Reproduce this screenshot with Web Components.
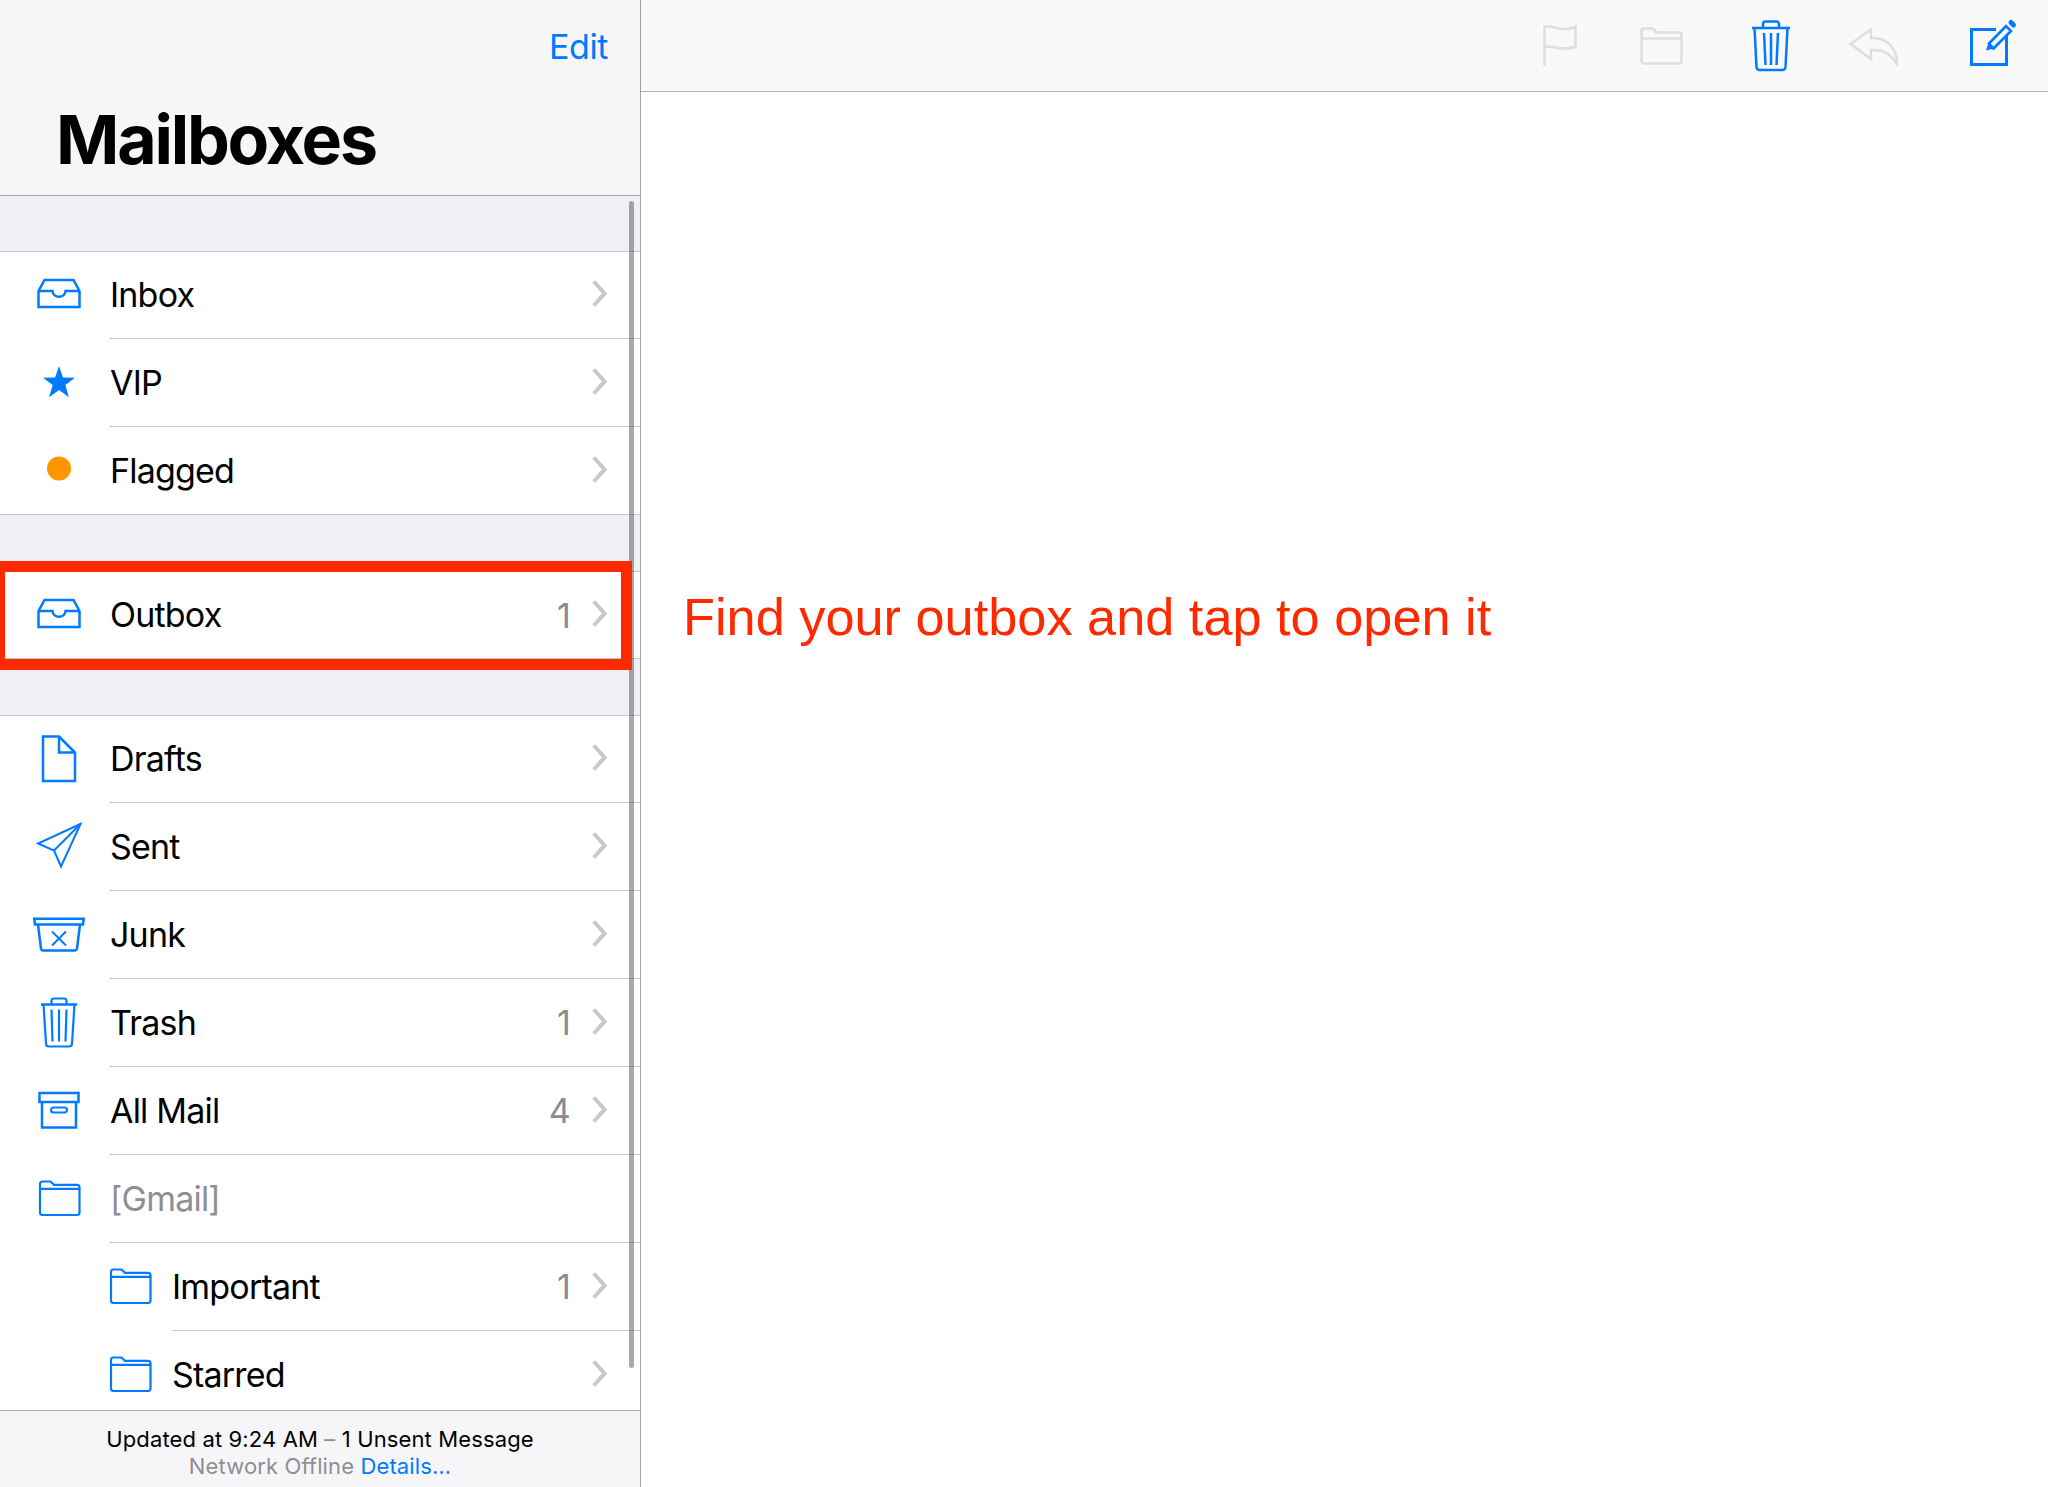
<!DOCTYPE html>
<html lang="en">
<head>
<meta charset="utf-8">
<title>Mailboxes</title>
<style>
html,body{margin:0;padding:0;height:100%;overflow:hidden;background:#fff;font-family:Inter,"Liberation Sans",sans-serif}
</style>
</head>
<body>
<mail-app>
  <mail-sidebar slot="side">
    <mail-header></mail-header>
    <mail-list>
      <mail-section>
        <mailbox-row icon="inbox" h="87">Inbox</mailbox-row>
        <mailbox-row icon="star">VIP</mailbox-row>
        <mailbox-row icon="dot" last h="87">Flagged</mailbox-row>
      </mail-section>
      <mail-section>
        <mailbox-row icon="inbox" count="1" last h="86">Outbox</mailbox-row>
      </mail-section>
      <mail-section>
        <mailbox-row icon="draft" h="87">Drafts</mailbox-row>
        <mailbox-row icon="sent">Sent</mailbox-row>
        <mailbox-row icon="junk">Junk</mailbox-row>
        <mailbox-row icon="trash" count="1">Trash</mailbox-row>
        <mailbox-row icon="archive" count="4">All Mail</mailbox-row>
        <mailbox-row icon="folder" muted>[Gmail]</mailbox-row>
        <mailbox-row icon="folder" count="1" sub>Important</mailbox-row>
        <mailbox-row icon="folder" sub last>Starred</mailbox-row>
      </mail-section>
    </mail-list>
    <mail-footer></mail-footer>
  </mail-sidebar>
  <mail-detail slot="main"></mail-detail>
</mail-app>
<script>
const BLUE = '#007aff';
const ICONS = {
  inbox:`<g fill="none" stroke="${BLUE}" stroke-width="2.5"><path d="M-20.5 -4.5L-14.5 -15.5H14.5L20.5 -4.5V11.5H-20.5Z"/><path d="M-20.5 -4.5H-6.5C-6 3 6 3 6.5 -4.5H20.5"/></g>`,
  star:`<path fill="${BLUE}" d="M0 -16.5L3.9 -4.9L16 -4.7L6.3 2.6L9.9 14.8L0 7.5L-9.9 14.8L-6.3 2.6L-16 -4.7L-3.9 -4.9Z"/>`,
  dot:`<circle cx="0" cy="-2" r="12" fill="#ff9500"/>`,
  draft:`<g fill="none" stroke="${BLUE}" stroke-width="2.5"><path d="M-16 -23H0L16 -7V21.5H-16Z"/><path d="M0 -23V-7H16"/></g>`,
  sent:`<g fill="none" stroke="${BLUE}" stroke-width="2" stroke-linejoin="miter"><path d="M21.5 -22.5L-21 -3L-5 4L2 20Z"/><path d="M21.5 -22.5L-5 4"/></g>`,
  junk:`<g fill="none" stroke="${BLUE}" stroke-width="2.5"><path d="M-24.7 -15.8H24.7L24 -10H-24Z"/><path d="M-21 -10L-18 14A2.5 2.5 0 0 0 -15.5 16H15.5A2.5 2.5 0 0 0 18 14L21 -10"/><path d="M-7 -3L7 11M7 -3L-7 11" stroke-width="2"/></g>`,
  trash:`<g fill="none" stroke="${BLUE}" stroke-width="2.2"><path d="M-18 -18H18" stroke-width="2.5"/><path d="M-7.5 -18V-21.5A2.5 2.5 0 0 1 -5 -24H5A2.5 2.5 0 0 1 7.5 -21.5V-18"/><path d="M-15.5 -18L-13 21A3 3 0 0 0 -10 24H10A3 3 0 0 0 13 21L15.5 -18"/><path d="M-7.5 -13L-6.5 19M0 -13V19M7.5 -13L6.5 19"/></g>`,
  archive:`<g fill="none" stroke="${BLUE}" stroke-width="2.5"><rect x="-19.5" y="-17.5" width="39" height="9"/><path d="M-17 -8.5V17H17V-8.5"/><rect x="-8" y="-3" width="16" height="5" rx="2.5" stroke-width="2.2"/></g>`,
  folder:`<g fill="none" stroke="${BLUE}" stroke-width="2.2"><path d="M-19 -9.7V-14.5A2.5 2.5 0 0 1 -16.5 -17H-8.5L-5 -13.7H18A2.5 2.5 0 0 1 20.5 -11.2V14A2.5 2.5 0 0 1 18 16.5H-16.5A2.5 2.5 0 0 1 -19 14Z"/><path d="M-19 -9.7H20.5"/></g>`
};

function define(name, html){
  customElements.define(name, class extends HTMLElement{
    constructor(){
      super();
      this.attachShadow({mode:'open'}).innerHTML = html;
    }
  });
}

define('mail-app', `<style>
:host{display:flex;width:2048px;height:1487px;position:relative;overflow:hidden;background:#fff;color:#000;font-family:Inter,"Liberation Sans",sans-serif}
.box{position:absolute;left:-6px;top:561px;width:638px;height:109px;box-sizing:border-box;border:11px solid #ff2900;z-index:5}
</style><slot name="side"></slot><slot name="main"></slot><div class="box"></div>`);

define('mail-sidebar', `<style>
:host{display:flex;flex-direction:column;flex:none;width:641px;height:1487px;box-sizing:border-box;border-right:1px solid #a3a3a6}
</style><slot></slot>`);

define('mail-header', `<style>
:host{display:flex;flex-direction:column;flex:none;height:196px;box-sizing:border-box;background:#f6f6f8;border-bottom:1px solid #a9a9ac}
.edit{height:93px;display:flex;align-items:center;justify-content:flex-end;padding-right:32px;font-size:34px;letter-spacing:-.4px;color:#007aff}
h1{margin:0;padding-left:56px;font-size:68px;line-height:92px;font-weight:700;letter-spacing:-2.2px}
</style><div class="edit">Edit</div><h1>Mailboxes</h1>`);

define('mail-list', `<style>
:host{display:block;flex:1;min-height:0;position:relative;overflow:hidden;background:#efeff4;padding-top:55px;box-sizing:border-box}
.bar{position:absolute;left:629px;top:5px;width:5px;height:1167px;border-radius:3px;background:rgba(60,60,67,.44);z-index:3}
</style><slot></slot><div class="bar"></div>`);

define('mail-section', `<style>
:host{display:block;margin-bottom:56px;background:#fff;border-top:1px solid #c8c7cc;border-bottom:1px solid #c8c7cc}
</style><slot></slot>`);

class MailboxRow extends HTMLElement{
  constructor(){
    super();
    this.attachShadow({mode:'open'});
  }
  connectedCallback(){
    const sub = this.hasAttribute('sub'), muted = this.hasAttribute('muted'),
          last = this.hasAttribute('last'), count = this.getAttribute('count'),
          h = this.getAttribute('h') || 88;
    this.shadowRoot.innerHTML = `<style>
:host{display:flex;height:${h}px;background:#fff;font-size:34px;letter-spacing:-.8px}
svg.ic{flex:none;width:80px;height:87px;margin-left:${sub?90:19}px;margin-right:${sub?2:11}px}
.cell{flex:1;min-width:0;display:flex;align-items:center;padding-right:33px;box-sizing:border-box;${last?'':'border-bottom:1px solid #c8c7cc;'}color:${muted?'#8e8e93':'#000'}}
.name{flex:1;padding-bottom:1px}
.count{color:#8a8a8f;margin-right:22px}
.chev{flex:none;width:15px;height:27px;margin-top:-3px}
</style>
<svg class="ic" viewBox="-40 -43.5 80 87">${ICONS[this.getAttribute('icon')]}</svg>
<div class="cell"><span class="name"><slot></slot></span>${count?`<span class="count">${count}</span>`:''}${muted?'':`<svg class="chev" viewBox="0 0 15 27"><path d="M1.8 1.5L12.6 13.5L1.8 25.5" fill="none" stroke="#c7c7cc" stroke-width="3.8"/></svg>`}</div>`;
  }
}
customElements.define('mailbox-row', MailboxRow);

define('mail-footer', `<style>
:host{display:block;flex:none;height:77px;box-sizing:border-box;background:#f6f6f8;border-top:1px solid #a9a9ac;text-align:center;font-size:22px;line-height:27px;padding-top:15px;letter-spacing:.13px;color:#000;position:relative;z-index:4}
.d{color:#8e8e93}.l{color:#007aff}
div{white-space:nowrap}
</style><div>Updated at 9:24 AM <span class="d">–</span> 1 Unsent Message</div><div><span class="d">Network Offline</span> <span class="l">Details…</span></div>`);

define('mail-toolbar', `<style>
:host{display:flex;flex:none;height:92px;box-sizing:border-box;background:#f9f9f9;border-bottom:1px solid #b2b2b2;justify-content:flex-end;padding-right:28px}
svg{flex:none;height:91px}
.off{fill:none;stroke:#dedede;stroke-width:2.5}
.on{fill:none;stroke:#007aff;stroke-width:2.5}
</style>
<svg style="width:40px" viewBox="1540 0 40 91"><path class="off" d="M1544.5 66V27C1552 24 1560 33 1575.5 27V47C1560 52 1552 44 1544.5 47.5"/></svg>
<svg style="width:50px;margin-left:56px" viewBox="1636 0 50 91"><path class="off" d="M1641.5 38.5V31A2.5 2.5 0 0 1 1644 28.5H1653L1656 32.5H1679A2.5 2.5 0 0 1 1681.5 35V61A2.5 2.5 0 0 1 1679 63.5H1644A2.5 2.5 0 0 1 1641.5 61ZM1641.5 38.5H1681.5"/></svg>
<svg style="width:48px;margin-left:61px" viewBox="1747 0 48 91"><path class="on" d="M1752 28H1790M1763 28V24A2.5 2.5 0 0 1 1765.5 21.5H1776.5A2.5 2.5 0 0 1 1779 24V28M1754.5 28L1756.5 67A3 3 0 0 0 1759.5 70H1782.5A3 3 0 0 0 1785.5 67L1787.5 28M1764 33L1765.5 65M1771 33V65M1778 33L1776.5 65"/></svg>
<svg style="width:56px;margin-left:50px" viewBox="1845 0 56 91"><path class="off" d="M1850.5 44L1871 29.5V38C1888 37 1897 49 1897 64C1890 54 1884 49 1871 50V59Z"/></svg>
<svg style="width:54px;margin-left:65px" viewBox="1966 0 54 91"><path class="on" style="stroke-width:3" d="M1996 29.5H1971.5V64.5H2006.5V35"/><path class="on" style="stroke-width:2.6" d="M1989 43.5L2006 26L2011 31L1993.5 48.5Z"/><path fill="#007aff" d="M1986 50.5L1988.5 42.5L1994.5 48.5Z"/><path fill="none" stroke="#007aff" stroke-width="5" stroke-linecap="round" d="M2011 22.5L2013.5 25"/></svg>`);

define('mail-detail', `<style>
:host{display:flex;flex-direction:column;flex:1;min-width:0;background:#fff}
p{margin:494px 0 0;padding:0 0 0 42px;font-family:"Liberation Sans",Arial,sans-serif;font-size:52.3px;line-height:62px;color:#ff2900}
</style><mail-toolbar></mail-toolbar><p>Find your outbox and tap to open it</p>`);
</script>
</body>
</html>
